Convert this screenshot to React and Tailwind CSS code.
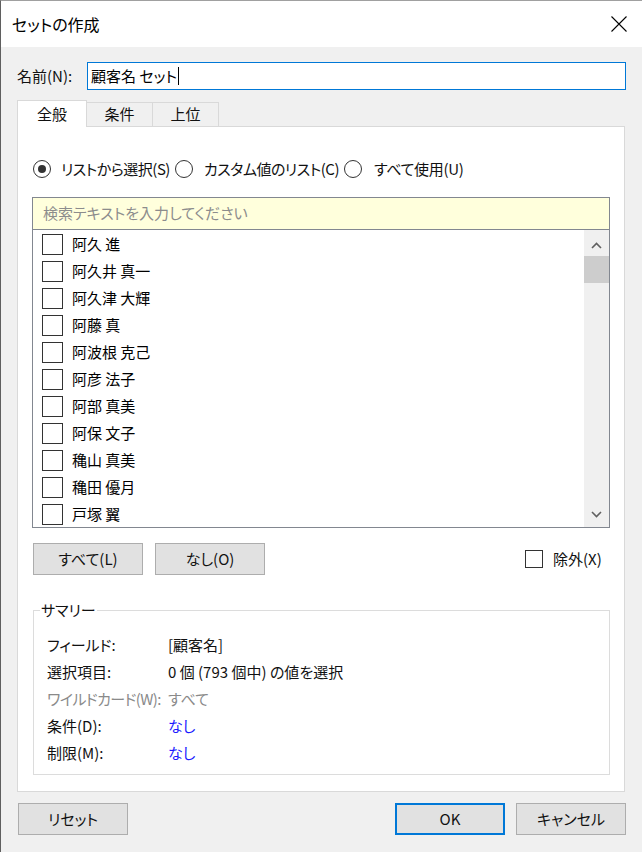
import React from "react";

const names = [
  "阿久 進",
  "阿久井 真一",
  "阿久津 大輝",
  "阿藤 真",
  "阿波根 克己",
  "阿彦 法子",
  "阿部 真美",
  "阿保 文子",
  "穐山 真美",
  "穐田 優月",
  "戸塚 翼",
];

function Radio({ checked }) {
  return (
    <span className="w-[18px] h-[18px] rounded-full border border-[#333] flex items-center justify-center shrink-0 bg-white">
      {checked && <span className="w-[8px] h-[8px] rounded-full bg-[#333]" />}
    </span>
  );
}

function Check() {
  return <span className="w-[21px] h-[21px] border border-[#333] bg-white shrink-0" />;
}

function Btn({ children, primary, w = "w-[110px]" }) {
  return (
    <button
      className={
        w +
        " h-[32px] bg-[#e1e1e1] flex items-center justify-center text-[15px] text-[#111] " +
        (primary ? "border-2 border-[#0078d7]" : "border border-[#adadad]")
      }
    >
      {children}
    </button>
  );
}

export default function App() {
  return (
    <div className="w-[642px] h-[852px] bg-[#f0f0f0] border-l border-l-[#5f5f5f] border-t border-t-[#a0a0a0] flex flex-col font-['Noto_Sans_CJK_JP',sans-serif] [font-feature-settings:'palt'] text-[15px] text-[#111] overflow-hidden">
      {/* title bar */}
      <div className="h-[46px] bg-white flex items-center justify-between pl-[11px] pr-[15px] shrink-0">
        <span className="text-[16px] text-black">セットの作成</span>
        <svg width="16" height="16" viewBox="0 0 16 16">
          <path d="M0.5 0.5 L15.5 15.5 M15.5 0.5 L0.5 15.5" stroke="#000" strokeWidth="1.1" fill="none" />
        </svg>
      </div>

      <div className="flex flex-col pl-[16px] w-[625px]">
        {/* name row */}
        <div className="flex items-center mt-[15px]">
          <span className="w-[70px] shrink-0">名前(N):</span>
          <div className="w-[539px] h-[28px] border border-[#0078d7] bg-white flex items-center pl-[3px]">
            <span className="text-black">顧客名 セット</span>
            <span className="w-px h-[18px] bg-black ml-[1px]" />
          </div>
        </div>

        {/* tabs */}
        <div className="flex items-end mt-[10px]">
          <div className="w-[70px] h-[27px] bg-white border border-[#d9d9d9] border-b-0 -mb-px relative z-10 flex items-center justify-center">
            全般
          </div>
          <div className="w-[66px] h-[24px] border border-[#d9d9d9] border-l-0 border-b-0 flex items-center justify-center">
            条件
          </div>
          <div className="w-[66px] h-[24px] border border-[#d9d9d9] border-l-0 border-b-0 flex items-center justify-center">
            上位
          </div>
        </div>

        {/* panel */}
        <div className="w-[608px] h-[666px] bg-white border border-[#d9d9d9] flex flex-col px-[14px]">
          {/* radio row */}
          <div className="flex items-center h-[18px] mt-[33px] ml-[1px] gap-[5px]">
            <div className="flex items-center gap-[10px]">
              <Radio checked />
              <span className="whitespace-nowrap tracking-[-0.5px]">リストから選択(S)</span>
            </div>
            <div className="flex items-center gap-[11px]">
              <Radio />
              <span className="whitespace-nowrap tracking-[-0.5px]">カスタム値のリスト(C)</span>
            </div>
            <div className="flex items-center gap-[12px]">
              <Radio />
              <span className="whitespace-nowrap tracking-[-0.3px]">すべて使用(U)</span>
            </div>
          </div>

          {/* list box */}
          <div className="w-[578px] h-[331px] border border-[#828790] mt-[19px] flex flex-col overflow-hidden">
            <div className="h-[32px] bg-[#ffffdc] border-b border-[#828790] flex items-center pl-[10px] text-[#8c8c8c] shrink-0">
              検索テキストを入力してください
            </div>
            <div className="flex flex-1 min-h-0">
              <div className="flex-1 flex flex-col pl-[9px] overflow-hidden">
                {names.map((n) => (
                  <div key={n} className="h-[27px] flex items-center gap-[9px] shrink-0 pt-[1px]">
                    <Check />
                    <span className="text-black">{n}</span>
                  </div>
                ))}
              </div>
              <div className="w-[25px] bg-[#f0f0f0] flex flex-col items-center">
                <svg width="11" height="7" viewBox="0 0 11 7" className="mt-[12px]">
                  <path d="M1 6 L5.5 1.5 L10 6" stroke="#606060" strokeWidth="1.6" fill="none" />
                </svg>
                <div className="w-[25px] h-[27px] bg-[#cdcdcd] mt-[7px]" />
                <div className="flex-1" />
                <svg width="11" height="7" viewBox="0 0 11 7" className="mb-[9px]">
                  <path d="M1 1 L5.5 5.5 L10 1" stroke="#606060" strokeWidth="1.6" fill="none" />
                </svg>
              </div>
            </div>
          </div>

          {/* buttons row */}
          <div className="flex items-center mt-[15px] ml-[1px]">
            <Btn>すべて(L)</Btn>
            <div className="w-[12px]" />
            <Btn>なし(O)</Btn>
            <div className="flex-1" />
            <div className="flex items-center gap-[10px] w-[85px]">
              <span className="w-[18px] h-[18px] border border-[#333] bg-white shrink-0" />
              <span className="whitespace-nowrap">除外(X)</span>
            </div>
          </div>

          {/* summary group */}
          <div className="relative w-[577px] h-[165px] border border-[#dcdcdc] mt-[35px] ml-[1px] flex flex-col pt-[21px] pl-[13px]">
            <span className="absolute left-[6px] -top-[12px] bg-white px-[1px] leading-[22px]">サマリー</span>
            <div className="flex h-[27px] items-center">
              <span className="w-[121px] shrink-0">フィールド:</span>
              <span>[顧客名]</span>
            </div>
            <div className="flex h-[27px] items-center">
              <span className="w-[121px] shrink-0">選択項目:</span>
              <span>0 個 (793 個中) の値を選択</span>
            </div>
            <div className="flex h-[27px] items-center text-[#8a8a8a]">
              <span className="w-[121px] shrink-0 whitespace-nowrap tracking-[-0.6px]">ワイルドカード(W):</span>
              <span>すべて</span>
            </div>
            <div className="flex h-[27px] items-center">
              <span className="w-[121px] shrink-0">条件(D):</span>
              <span className="text-[#1a1aff]">なし</span>
            </div>
            <div className="flex h-[27px] items-center">
              <span className="w-[121px] shrink-0">制限(M):</span>
              <span className="text-[#1a1aff]">なし</span>
            </div>
          </div>
        </div>

        {/* bottom buttons */}
        <div className="flex items-center justify-between mt-[11px] pl-[1px]">
          <Btn>リセット</Btn>
          <div className="flex items-center gap-[11px]">
            <Btn primary>OK</Btn>
            <Btn>キャンセル</Btn>
          </div>
        </div>
      </div>
    </div>
  );
}
